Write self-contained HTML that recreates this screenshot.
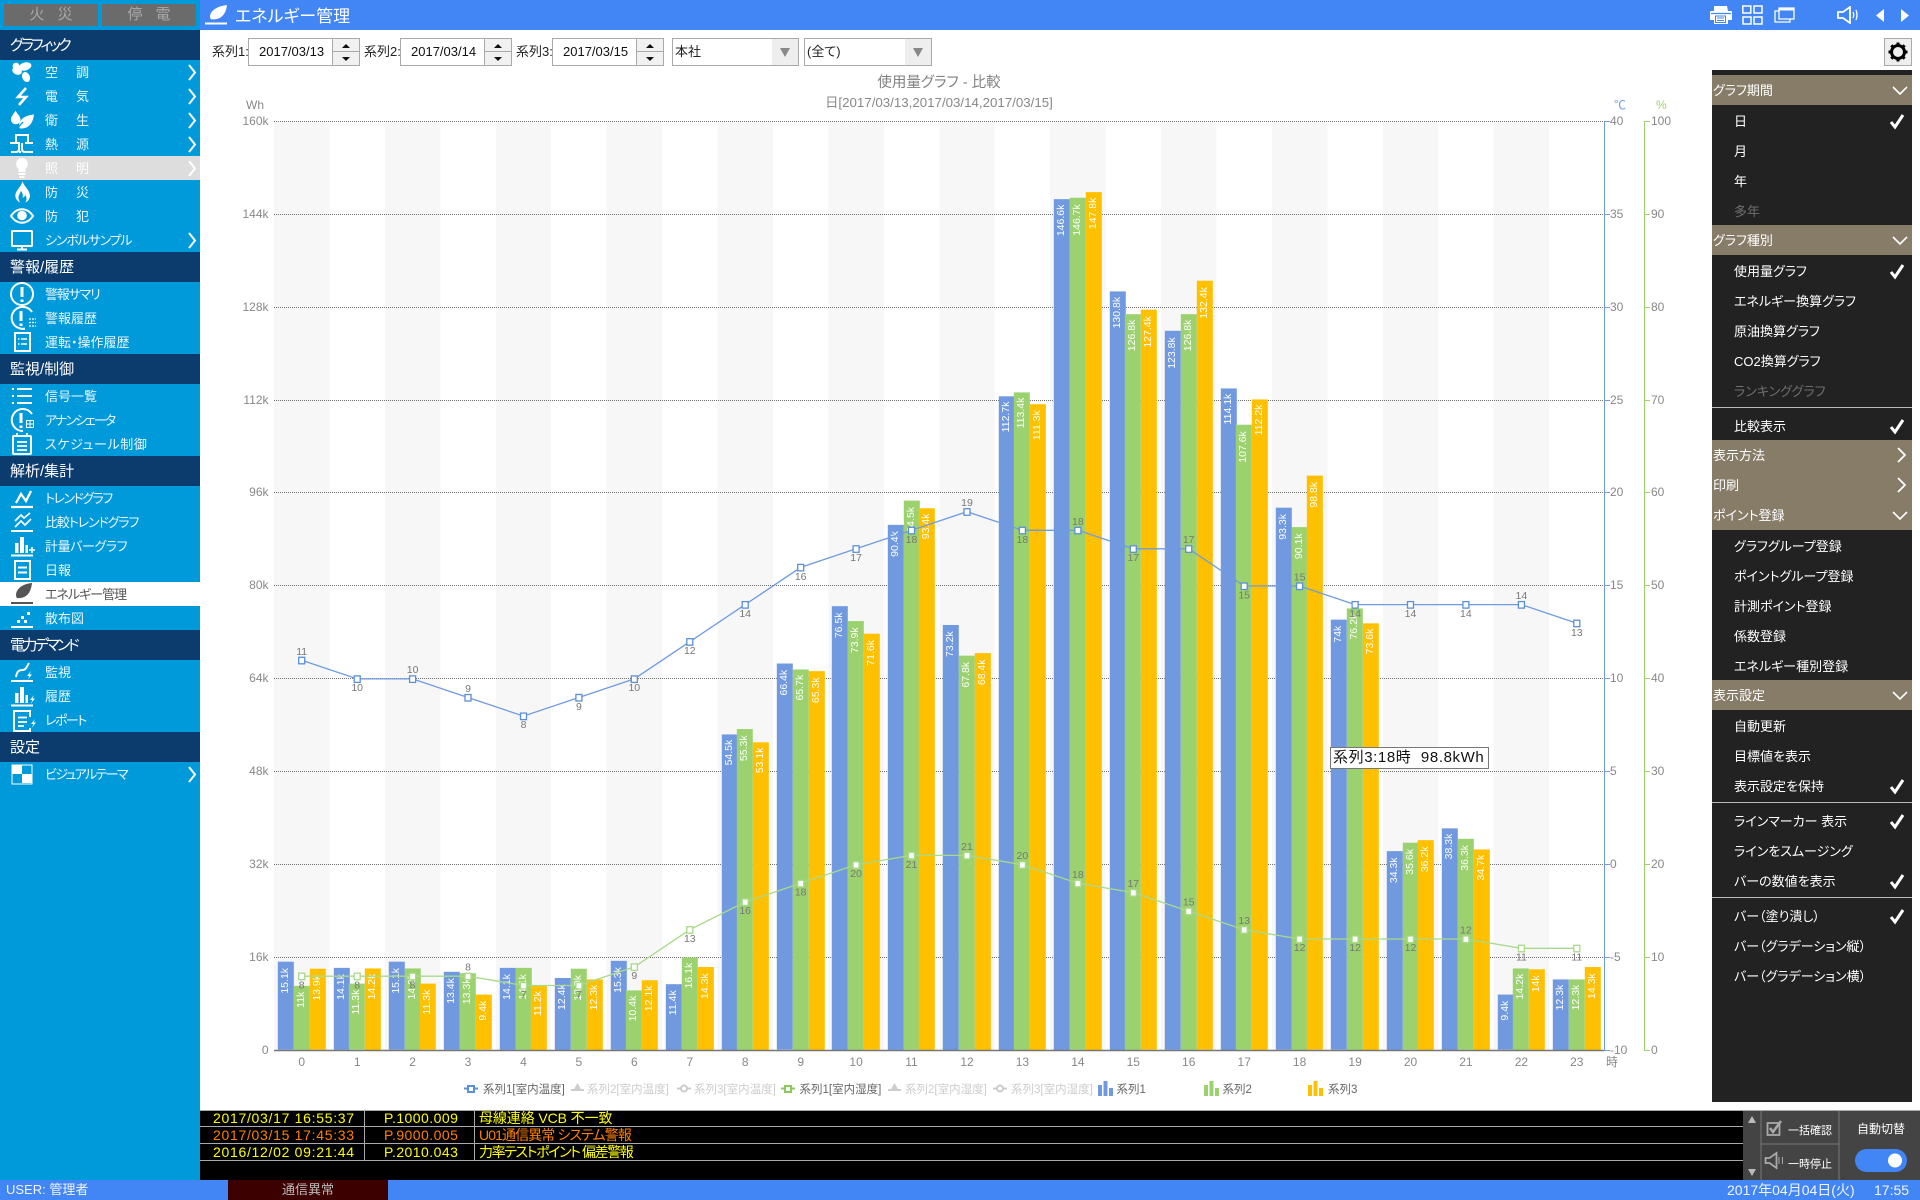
<!DOCTYPE html>
<html lang="ja"><head><meta charset="utf-8"><title>エネルギー管理</title>
<style>
*{box-sizing:border-box}
html,body{margin:0;padding:0;width:1920px;height:1200px;overflow:hidden;background:#fff;font-family:"Liberation Sans","Noto Sans CJK JP",sans-serif;font-feature-settings:"palt"}
.a{position:absolute}
#side{left:0;top:0;width:200px;height:1180px;background:#009ada;color:#fff}
.ab{position:absolute;top:4px;width:94px;height:22px;background:#6b6b6b;color:#a8a8a8;font-size:15px;line-height:22px;text-align:center;letter-spacing:13px;padding-left:13px}
#nav{position:absolute;top:30px;left:0;width:200px}
.s{height:30px;line-height:32px;background:#0c3b6e;padding-left:10px;font-size:15px}
.r{position:relative;height:24px;line-height:26px;padding-left:45px;font-size:13px;color:#eaf6fc;white-space:nowrap}
.r .w{letter-spacing:18px}
.r.dis{background:#ddd;color:#fff}
.r.act{background:#fff;color:#555}
.ic{position:absolute;left:8px;top:0;width:28px;height:24px;fill:none;stroke:#fff;stroke-width:2}
.ic .f{fill:#fff;stroke:none}
.act .ic{stroke:#555}.act .ic .f{fill:#555}
.cv{position:absolute;left:187px;top:4px;width:10px;height:17px;fill:none;stroke:#fff;stroke-width:2}
#top{left:200px;top:0;width:1720px;height:30px;background:#4285f4;color:#fff}
.inp{position:absolute;top:38px;height:28px;background:#fff;border:1px solid #aaa;font-size:13px;line-height:26px;color:#111}
.spin{position:absolute;top:0;right:0;width:27px;height:26px;border-left:1px solid #aaa;background:#f1f1f1}
.spin:before{content:"";position:absolute;left:0;right:0;top:12px;border-top:1px solid #aaa}
.spin i{position:absolute;left:9px;width:0;height:0;border-left:4px solid transparent;border-right:4px solid transparent}
.spin i.u{top:5px;border-bottom:4px solid #111}.spin i.d{top:18px;border-top:4px solid #111}
.lb{position:absolute;top:38px;height:28px;line-height:28px;font-size:13px;color:#222}
.sel{position:absolute;top:38px;height:28px;background:#fff;border:1px solid #aaa;font-size:13px;line-height:26px;padding-left:2px;color:#222}
.sel s{position:absolute;right:0;top:0;width:26px;height:26px;background:#eee}
.sel s:after{content:"";position:absolute;left:8px;top:9px;border-left:5px solid transparent;border-right:5px solid transparent;border-top:9px solid #888}
#stripes{left:274px;top:122px;width:1330px;height:928px;background:repeating-linear-gradient(90deg,#f7f7f7 0,#f7f7f7 55.44px,#fff 55.44px,#fff 110.88px)}
.g{position:absolute;bottom:150px;width:48px;display:flex;align-items:flex-end}
.g b{display:block;flex:0 0 15.8px;width:15.8px;height:calc(var(--v)*5.806px);font-weight:400;font-size:10.5px;line-height:15.8px;color:#fff;writing-mode:vertical-rl;transform:rotate(180deg);text-align:right;padding-bottom:6px;white-space:nowrap;background:#7099e0}
.g b:nth-child(2){background:#9bd26f}
.g b:nth-child(3){background:#ffc000}
svg text{font-family:"Liberation Sans","Noto Sans CJK JP",sans-serif}
.tx text{font-size:10.5px;fill:#777;text-anchor:middle}
.yl text{font-size:12px;fill:#888;text-anchor:end}
.yr text{font-size:12px;fill:#888}
.xl text{font-size:12px;fill:#888;text-anchor:middle}
.lg text{font-size:11.5px;fill:#666}
.lg .off{fill:#ccc}
#panel{left:1712px;top:70px;width:200px;height:1032px;background:#222;color:#fff;font-size:13px;padding-top:5px}
.h{position:relative;height:30px;line-height:32px;background:#877c68;padding-left:1px;white-space:nowrap}
.it{position:relative;height:30px;line-height:33px;padding-left:22px;white-space:nowrap}
.it.off{color:#6e6e6e}
.sep{height:5px;position:relative}
.sep:after{content:"";position:absolute;left:0;right:0;top:2px;border-top:1px solid #bbb}
.ck{position:absolute;left:177px;top:9px;width:16px;height:16px;fill:none;stroke:#fff;stroke-width:3}
.dn{position:absolute;left:180px;top:11px;width:16px;height:9px;fill:none;stroke:#fff;stroke-width:1.6}
.rt{position:absolute;left:185px;top:7px;width:9px;height:16px;fill:none;stroke:#fff;stroke-width:1.8}
#alarm{left:200px;top:1110px;width:1543px;height:70px;background:#000;font-size:14px;white-space:nowrap}
.row{position:absolute;left:0;width:1543px;height:17px;border-bottom:1px solid #aaa;line-height:16px;color:#ff0;letter-spacing:.45px}
.row span{position:absolute;top:0}
.row.o{color:#ff7f00}
.vl{position:absolute;top:0;height:51px;border-left:1px solid #aaa}
#stat{left:0;top:1180px;width:1920px;height:20px;background:#4285f4;color:#f0f5ff;line-height:20px;white-space:nowrap}
</style></head><body>

<div id="side" class="a">
<div class="ab" style="left:4px">火災</div>
<div class="ab" style="left:102px">停電</div>
<div id="nav">
<div class="s" style="letter-spacing:-2.8px">グラフィック</div>
<div class="r"><svg class="ic" viewBox="0 0 28 24"><g class="f"><ellipse cx="17" cy="6.5" rx="6.5" ry="4" transform="rotate(-15 17 6.5)"/><ellipse cx="9" cy="11" rx="5" ry="3.6" transform="rotate(20 9 11)"/><ellipse cx="18" cy="17" rx="3.8" ry="5.2" transform="rotate(-25 18 17)"/><ellipse cx="8" cy="6" rx="3.4" ry="3.4"/></g></svg><span class="w">空調</span><svg class="cv" viewBox="0 0 10 17"><path d="M2 1l6 7.5L2 16"/></svg></div>
<div class="r"><svg class="ic" viewBox="0 0 28 24"><path d="M18 4l-8 9h8l-7 8" stroke-width="2.6"/></svg><span class="w">電気</span><svg class="cv" viewBox="0 0 10 17"><path d="M2 1l6 7.5L2 16"/></svg></div>
<div class="r"><svg class="ic" viewBox="0 0 28 24"><path class="f" d="M7.500 2.500C9 6 12.500 8 12.500 11.500a4.800 4.800 0 0 1-9.600 0C2.900 8 6 6 7.500 2.500z"/><path class="f" d="M26 6.500C16 7.500 11 12 11 17.500c0 1.200.4 2.200 1 3C21 21 25 15 26 6.500z"/><path d="M6 24l9-10" stroke="#009ada" stroke-width="1.300"/></svg><span class="w">衛生</span><svg class="cv" viewBox="0 0 10 17"><path d="M2 1l6 7.5L2 16"/></svg></div>
<div class="r"><svg class="ic" viewBox="0 0 28 24"><path d="M8 11V3h12v8M2 11h9v6q0 3-3 3H3M17 11h8M14 11v6q0 3 3 3h8M13 20h-2" stroke-width="2"/></svg><span class="w">熱源</span><svg class="cv" viewBox="0 0 10 17"><path d="M2 1l6 7.5L2 16"/></svg></div>
<div class="r dis"><svg class="ic" viewBox="0 0 28 24"><path class="f" d="M14 2a6 6 0 0 1 3.500 10.800V16h-7v-3.200A6 6 0 0 1 14 2zM10.500 17h7v2h-7zM11.500 20h5v2h-5z"/></svg><span class="w">照明</span><svg class="cv" viewBox="0 0 10 17"><path d="M2 1l6 7.5L2 16"/></svg></div>
<div class="r"><svg class="ic" viewBox="0 0 28 24"><path class="f" d="M14.500 1c1 5 7.500 9 7.500 15a7.500 7.500 0 0 1-5 6.500c2-2 2-5 .2-7.500-.6 2-1.700 2.500-2.500 2.700.6-3-.4-5.500-2-7-.1 3-2.400 4-2.200 7 .1 2 .8 3.500 1.800 4.800a7.500 7.500 0 0 1-5-7C7.500 10 13.500 7 14.500 1z"/></svg><span class="w">防災</span></div>
<div class="r"><svg class="ic" viewBox="0 0 28 24"><path d="M3 12c6-9 16-9 22 0-6 9-16 9-22 0z"/><circle class="f" cx="14" cy="11.500" r="4.800"/></svg><span class="w">防犯</span></div>
<div class="r" style="letter-spacing:-1.2px"><svg class="ic" viewBox="0 0 28 24"><rect x="4" y="3" width="20" height="15" rx=".5"/><path d="M9 21.500h10M14 18v3" /></svg>シンボルサンプル<svg class="cv" viewBox="0 0 10 17"><path d="M2 1l6 7.500L2 16"/></svg></div>
<div class="s">警報/履歴</div>
<div class="r" style="letter-spacing:-1.2px"><svg class="ic" viewBox="0 0 28 24"><circle cx="14" cy="12" r="11"/><path d="M14 5v10M14 17.500v2.500" stroke-width="3"/></svg>警報サマリ</div>
<div class="r"><svg class="ic" viewBox="0 0 28 24"><path d="M24 6A11 11 0 1 0 17 22.600"/><path d="M13 5v10M13 17.500v2.500" stroke-width="3"/><path d="M21 13h8M21 16.500h8M21 20h8" stroke-width="1.300" stroke-dasharray="2 1"/></svg>警報履歴</div>
<div class="r"><svg class="ic" viewBox="0 0 28 24"><rect x="7" y="3" width="15" height="18"/><path d="M10 9h1.500M13 9h6M10 14h1.500M13 14h6" stroke-width="1.600"/></svg>運転・操作履歴</div>
<div class="s">監視/制御</div>
<div class="r"><svg class="ic" viewBox="0 0 28 24"><path d="M4 5h2M9 5h15M4 12h2M9 12h15M4 19h2M9 19h15"/></svg>信号一覧</div>
<div class="r" style="letter-spacing:-1.9px"><svg class="ic" viewBox="0 0 28 24"><path d="M24 6A11 11 0 1 0 15 23"/><path d="M13 5v10M13 17.500v2.500" stroke-width="3"/><path d="M18.500 12.500h7v7h-7zM22 12.500v7M18.500 16h7" stroke-width="1"/></svg>アナンシェータ</div>
<div class="r" style="letter-spacing:.6px"><svg class="ic" viewBox="0 0 28 24"><rect x="5" y="4" width="18" height="18" rx="1"/><path d="M9 1v4M19 1v4M9 10h10M9 14h10M9 18h10" stroke-width="1.700"/></svg>スケジュール制御</div>
<div class="s">解析/集計</div>
<div class="r" style="letter-spacing:-1.5px"><svg class="ic" viewBox="0 0 28 24"><path d="M3 21h22M8 17l5-9 5 7 5-10" stroke-width="2.300"/></svg>トレンドグラフ</div>
<div class="r" style="letter-spacing:-1.1px"><svg class="ic" viewBox="0 0 28 24"><path d="M3 21h22"/><path d="M7 11l6-6 3 3 6-5M7 17l6-6 4 4 6-6" stroke-width="1.700"/></svg>比較トレンドグラフ</div>
<div class="r" style="letter-spacing:-.4px"><svg class="ic" viewBox="0 0 28 24"><path d="M3 21.500h22"/><path class="f" d="M7 9h3.500v10H7zM12 3h4v16h-4zM17.500 11H20v8h-2.500z"/><path d="M24 13v6M21 16h6" stroke-width="1.600"/></svg>計量バーグラフ</div>
<div class="r"><svg class="ic" viewBox="0 0 28 24"><rect x="7" y="3" width="15" height="18"/><path d="M10 9.500h9M10 14.500h9"/></svg>日報</div>
<div class="r act" style="letter-spacing:-1px"><svg class="ic" viewBox="0 0 28 24"><path class="f" d="M24 1C13 2 8 8 8 13c0 1.200.4 2.300 1 3C19 17 23 10 24 1z"/><path d="M3 21h22"/></svg>エネルギー管理</div>
<div class="r"><svg class="ic" viewBox="0 0 28 24"><path d="M3 21h22"/><path class="f" d="M9 14h3v3H9zM13 10h3v3h-3zM16 14h3v3h-3zM19 6h3v3h-3z"/></svg>散布図</div>
<div class="s" style="letter-spacing:-2.6px">電力デマンド</div>
<div class="r"><svg class="ic" viewBox="0 0 28 24"><path d="M3 21h22M8 17c1-6 3-7 7-7 3 0 4-4 6-7"/><path class="f" d="M23 11l-4 5h2.500l-2 4 4.500-5.500H21.500z"/></svg>監視</div>
<div class="r"><svg class="ic" viewBox="0 0 28 24"><path d="M3 21.500h22"/><path class="f" d="M7 9h3.500v10H7zM12 3h4v16h-4zM17.500 11H20v8h-2.500z"/><path class="f" d="M26 11l-4 5h2.500l-2 4 4.500-5.500h-2.500z"/></svg>履歴</div>
<div class="r" style="letter-spacing:-1.5px"><svg class="ic" viewBox="0 0 28 24"><path d="M22 9V3H6v20h16v-3"/><path d="M10 9.500h9M10 14h9M10 18h6" stroke-width="1.800"/><path class="f" d="M27 11l-4 5h2.500l-2 4 4.500-5.500h-2.500z"/></svg>レポート</div>
<div class="s">設定</div>
<div class="r" style="letter-spacing:-1.6px"><svg class="ic" viewBox="0 0 28 24"><path class="f" d="M4 3h10v9H4zM14 12h10v9H14z"/><path d="M4 3h20v19H4z" stroke-width="1"/></svg>ビジュアルテーマ<svg class="cv" viewBox="0 0 10 17"><path d="M2 1l6 7.500L2 16"/></svg></div>
</div>
</div>

<div id="top" class="a">
<svg class="a" style="left:5px;top:5px" width="24" height="20" viewBox="0 0 24 20" fill="#fff"><path d="M22 0C10 1.500 5 7 5 11.500c0 1 .3 2 1 2.700C16 15.500 21 9 22 0z"/><path d="M0 17.500h22v2H0z"/></svg>
<div class="a" style="left:35px;top:0;line-height:33px;font-size:17px;white-space:nowrap">エネルギー管理</div>
<svg class="a" style="left:1510px;top:5px" width="22" height="20" viewBox="0 0 22 20"><path fill="#fff" d="M4 1h13l1 5h3a1 1 0 0 1 1 1v8h-4v4H4v-4H0V7a1 1 0 0 1 1-1h3z"/><path d="M5.500 11h10v6.500h-10zM7 13h7M7 15.500h7" fill="#fff" stroke="#4285f4" stroke-width="1"/><path d="M1 8.500h20" stroke="#4285f4" stroke-width="1.200"/></svg>
<svg class="a" style="left:1542px;top:5px" width="21" height="20" viewBox="0 0 21 20" fill="none" stroke="#fff" stroke-width="1.500"><rect x=".8" y="1" width="8" height="7"/><rect x="12" y="1" width="8" height="7"/><rect x="1" y="12" width="8" height="7"/><rect x="12" y="12" width="8" height="7"/></svg>
<svg class="a" style="left:1574px;top:6px" width="21" height="18" viewBox="0 0 21 18" fill="none" stroke="#fff" stroke-width="1.300"><path d="M5 2h15v11H5z"/><path d="M5 3.500h15" stroke-width="2"/><path d="M5 5H1v11h15v-3"/></svg>
<svg class="a" style="left:1637px;top:6px" width="24" height="18" viewBox="0 0 24 18" fill="none" stroke="#fff" stroke-width="1.800"><path d="M1 6h5l7-5v16l-7-5H1z"/><path d="M16 6q1.500 3 0 6M19 4q2 5 0 10" stroke-width="1.300"/></svg>
<svg class="a" style="left:1676px;top:9px" width="8" height="13" viewBox="0 0 8 13" fill="#fff"><path d="M8 0v13L0 6.500z"/></svg>
<svg class="a" style="left:1701px;top:9px" width="8" height="13" viewBox="0 0 8 13" fill="#fff"><path d="M0 0v13l8-6.500z"/></svg>
</div>

<div class="lb" style="left:212px">系列1:</div>
<div class="inp" style="left:248px;width:112px;padding-left:10px">2017/03/13<div class="spin"><i class="u"></i><i class="d"></i></div></div>
<div class="lb" style="left:364px">系列2:</div>
<div class="inp" style="left:400px;width:112px;padding-left:10px">2017/03/14<div class="spin"><i class="u"></i><i class="d"></i></div></div>
<div class="lb" style="left:516px">系列3:</div>
<div class="inp" style="left:552px;width:112px;padding-left:10px">2017/03/15<div class="spin"><i class="u"></i><i class="d"></i></div></div>
<div class="sel" style="left:672px;width:127px">本社<s></s></div>
<div class="sel" style="left:804px;width:128px">(全て)<s></s></div>
<svg class="a" style="left:1884px;top:38px" width="28" height="28" viewBox="0 0 28 28"><rect x=".5" y=".5" width="27" height="27" fill="#eee" stroke="#aaa"/><circle cx="14" cy="14" r="6.500" fill="none" stroke="#000" stroke-width="3"/><path d="M14 4.500v19M4.500 14h19" stroke="#000" stroke-width="3" stroke-dasharray="2.500 14 2.500"/><path d="M7.300 7.300l13.400 13.400M20.700 7.300L7.300 20.700" stroke="#000" stroke-width="3" stroke-dasharray="2.500 14 2.500"/></svg>

<div class="a" style="left:739px;width:400px;top:73px;text-align:center;font-size:14.500px;line-height:20px;color:#808080">使用量グラフ - 比較</div>
<div class="a" style="left:739px;width:400px;top:94px;text-align:center;font-size:13.300px;line-height:18px;color:#888">日[2017/03/13,2017/03/14,2017/03/15]</div>

<div id="stripes" class="a"></div>
<svg class="a" style="left:0;top:0" width="1920" height="1200"><g stroke="#707070" stroke-width="1" stroke-dasharray="1 1"><path d="M274 121.500H1604M274 214.500H1604M274 307.500H1604M274 400.500H1604M274 492.500H1604M274 585.500H1604M274 678.500H1604M274 771.500H1604M274 864.500H1604M274 957.500H1604"/></g></svg>

<div class="g" style="left:278px"><b style="--v:15.1">15.1k</b><b style="--v:11">11k</b><b style="--v:13.9">13.9k</b></div>
<div class="g" style="left:333.5px"><b style="--v:14.1">14.1k</b><b style="--v:11.3">11.3k</b><b style="--v:14.2">14.2k</b></div>
<div class="g" style="left:388.9px"><b style="--v:15.1">15.1k</b><b style="--v:14.2">14.2k</b><b style="--v:11.3">11.3k</b></div>
<div class="g" style="left:444.3px"><b style="--v:13.4">13.4k</b><b style="--v:13.3">13.3k</b><b style="--v:9.4">9.4k</b></div>
<div class="g" style="left:499.8px"><b style="--v:14.1">14.1k</b><b style="--v:14.1">14.1k</b><b style="--v:11.2">11.2k</b></div>
<div class="g" style="left:555.2px"><b style="--v:12.4">12.4k</b><b style="--v:13.9">13.9k</b><b style="--v:12.3">12.3k</b></div>
<div class="g" style="left:610.6px"><b style="--v:15.3">15.3k</b><b style="--v:10.4">10.4k</b><b style="--v:12.1">12.1k</b></div>
<div class="g" style="left:666.1px"><b style="--v:11.4">11.4k</b><b style="--v:16.1">16.1k</b><b style="--v:14.3">14.3k</b></div>
<div class="g" style="left:721.5px"><b style="--v:54.5">54.5k</b><b style="--v:55.3">55.3k</b><b style="--v:53.1">53.1k</b></div>
<div class="g" style="left:777px"><b style="--v:66.4">66.4k</b><b style="--v:65.7">65.7k</b><b style="--v:65.3">65.3k</b></div>
<div class="g" style="left:832.4px"><b style="--v:76.5">76.5k</b><b style="--v:73.9">73.9k</b><b style="--v:71.6">71.6k</b></div>
<div class="g" style="left:887.8px"><b style="--v:90.4">90.4k</b><b style="--v:94.5">94.5k</b><b style="--v:93.4">93.4k</b></div>
<div class="g" style="left:943.3px"><b style="--v:73.2">73.2k</b><b style="--v:67.8">67.8k</b><b style="--v:68.4">68.4k</b></div>
<div class="g" style="left:998.7px"><b style="--v:112.7">112.7k</b><b style="--v:113.4">113.4k</b><b style="--v:111.3">111.3k</b></div>
<div class="g" style="left:1054.2px"><b style="--v:146.6">146.6k</b><b style="--v:146.7">146.7k</b><b style="--v:147.8">147.8k</b></div>
<div class="g" style="left:1109.6px"><b style="--v:130.8">130.8k</b><b style="--v:126.8">126.8k</b><b style="--v:127.4">127.4k</b></div>
<div class="g" style="left:1165px"><b style="--v:123.8">123.8k</b><b style="--v:126.8">126.8k</b><b style="--v:132.4">132.4k</b></div>
<div class="g" style="left:1220.5px"><b style="--v:114.1">114.1k</b><b style="--v:107.6">107.6k</b><b style="--v:112.2">112.2k</b></div>
<div class="g" style="left:1275.9px"><b style="--v:93.3">93.3k</b><b style="--v:90.1">90.1k</b><b style="--v:98.8">98.8k</b></div>
<div class="g" style="left:1331.4px"><b style="--v:74">74k</b><b style="--v:76.2">76.2k</b><b style="--v:73.6">73.6k</b></div>
<div class="g" style="left:1386.8px"><b style="--v:34.3">34.3k</b><b style="--v:35.6">35.6k</b><b style="--v:36.2">36.2k</b></div>
<div class="g" style="left:1442.2px"><b style="--v:38.3">38.3k</b><b style="--v:36.3">36.3k</b><b style="--v:34.7">34.7k</b></div>
<div class="g" style="left:1497.7px"><b style="--v:9.4">9.4k</b><b style="--v:14.2">14.2k</b><b style="--v:14">14k</b></div>
<div class="g" style="left:1553.1px"><b style="--v:12.3">12.3k</b><b style="--v:12.3">12.3k</b><b style="--v:14.3">14.3k</b></div>

<svg class="a" style="left:0;top:0" width="1920" height="1200">
<defs>
<marker id="mb" markerUnits="userSpaceOnUse" markerWidth="10" markerHeight="10" refX="5" refY="5"><rect x="2" y="2" width="6" height="6.500" fill="#fff" stroke="#5b8fd8" stroke-width="1.300"/></marker>
<marker id="mg" markerUnits="userSpaceOnUse" markerWidth="10" markerHeight="10" refX="5" refY="5"><rect x="2" y="2" width="6" height="6.500" fill="#fff" stroke="#a9d98a" stroke-width="1.300"/></marker>
</defs>
<path d="M274 1050.500H1604" stroke="#777" stroke-width="1.500"/>
<path d="M1604.500 121V1051M1604 121.500h6M1604 214.500h6M1604 307.500h6M1604 400.500h6M1604 492.500h6M1604 585.500h6M1604 678.500h6M1604 771.500h6M1604 864.500h6M1604 957.500h6M1604 1050.500h6" stroke="#6f9be0" fill="none"/>
<path d="M1644.500 121V1051M1644 121.500h6M1644 214.500h6M1644 307.500h6M1644 400.500h6M1644 492.500h6M1644 585.500h6M1644 678.500h6M1644 771.500h6M1644 864.500h6M1644 957.500h6M1644 1050.500h6" stroke="#9bd26f" fill="none"/>
<polyline fill="none" stroke="#6f9be0" stroke-width="1.300" marker-start="url(#mb)" marker-mid="url(#mb)" marker-end="url(#mb)" points="301.7,660.3 357.2,678.9 412.6,678.9 468,697.5 523.5,716.1 578.9,697.5 634.3,678.9 689.8,641.7 745.2,604.6 800.7,567.4 856.1,548.8 911.5,530.3 967,511.7 1022.4,530.3 1077.9,530.3 1133.3,548.8 1188.7,548.8 1244.2,586 1299.6,586 1355.1,604.6 1410.5,604.6 1465.9,604.6 1521.4,604.6 1576.8,623.2"/>
<polyline fill="none" stroke="#a9d98a" stroke-width="1.300" marker-start="url(#mg)" marker-mid="url(#mg)" marker-end="url(#mg)" points="301.7,976.2 357.2,976.2 412.6,976.2 468,976.2 523.5,985.5 578.9,985.5 634.3,966.9 689.8,929.7 745.2,901.9 800.7,883.3 856.1,864.7 911.5,855.4 967,855.4 1022.4,864.7 1077.9,883.3 1133.3,892.6 1188.7,911.2 1244.2,929.7 1299.6,939 1355.1,939 1410.5,939 1465.9,939 1521.4,948.3 1576.8,948.3"/>
<g class="tx">
<text x="301.7" y="655">11</text><text x="357.2" y="691">10</text><text x="412.6" y="673">10</text><text x="468" y="692">9</text><text x="523.5" y="728">8</text><text x="578.9" y="710">9</text><text x="634.3" y="691">10</text><text x="689.8" y="654">12</text><text x="745.2" y="617">14</text><text x="800.7" y="580">16</text><text x="856.1" y="561">17</text><text x="911.5" y="543">18</text><text x="967" y="506">19</text><text x="1022.4" y="543">18</text><text x="1077.9" y="525">18</text><text x="1133.3" y="561">17</text><text x="1188.7" y="543">17</text><text x="1244.2" y="598.5">15</text><text x="1299.6" y="580.5">15</text><text x="1355.1" y="617">14</text><text x="1410.5" y="617">14</text><text x="1465.9" y="617">14</text><text x="1521.4" y="599">14</text><text x="1576.8" y="636">13</text>
<text x="301.7" y="988.5">8</text><text x="357.2" y="988.5">8</text><text x="412.6" y="988.5">8</text><text x="468" y="970.5">8</text><text x="523.5" y="998">7</text><text x="578.9" y="998">7</text><text x="634.3" y="979">9</text><text x="689.8" y="942">13</text><text x="745.2" y="914">16</text><text x="800.7" y="895.5">18</text><text x="856.1" y="877">20</text><text x="911.5" y="868">21</text><text x="967" y="850">21</text><text x="1022.4" y="859">20</text><text x="1077.9" y="878">18</text><text x="1133.3" y="887">17</text><text x="1188.7" y="905.5">15</text><text x="1244.2" y="924">13</text><text x="1299.6" y="951">12</text><text x="1355.1" y="951">12</text><text x="1410.5" y="951">12</text><text x="1465.9" y="933.5">12</text><text x="1521.4" y="960.5">11</text><text x="1576.8" y="960.5">11</text>
</g>
<g class="yl"><text x="264" y="109" >Wh</text><text x="268.500" y="125">160k</text><text x="268.500" y="218">144k</text><text x="268.500" y="311">128k</text><text x="268.500" y="404">112k</text><text x="268.500" y="496">96k</text><text x="268.500" y="589">80k</text><text x="268.500" y="682">64k</text><text x="268.500" y="775">48k</text><text x="268.500" y="868">32k</text><text x="268.500" y="961">16k</text><text x="268.500" y="1054">0</text></g>
<g class="yr"><text x="1610" y="125">40</text><text x="1610" y="218">35</text><text x="1610" y="311">30</text><text x="1610" y="404">25</text><text x="1610" y="496">20</text><text x="1610" y="589">15</text><text x="1610" y="682">10</text><text x="1610" y="775">5</text><text x="1610" y="868">0</text><text x="1610" y="961">-5</text><text x="1610" y="1054">-10</text>
<text x="1651" y="125">100</text><text x="1651" y="218">90</text><text x="1651" y="311">80</text><text x="1651" y="404">70</text><text x="1651" y="496">60</text><text x="1651" y="589">50</text><text x="1651" y="682">40</text><text x="1651" y="775">30</text><text x="1651" y="868">20</text><text x="1651" y="961">10</text><text x="1651" y="1054">0</text></g>
<text x="1614" y="109" style="font-size:12px;fill:#6f9be0">℃</text><text x="1656" y="109" style="font-size:12px;fill:#9bd26f">%</text>
<g class="xl"><text x="301.7" y="1066">0</text><text x="357.2" y="1066">1</text><text x="412.6" y="1066">2</text><text x="468" y="1066">3</text><text x="523.5" y="1066">4</text><text x="578.9" y="1066">5</text><text x="634.3" y="1066">6</text><text x="689.8" y="1066">7</text><text x="745.2" y="1066">8</text><text x="800.7" y="1066">9</text><text x="856.1" y="1066">10</text><text x="911.5" y="1066">11</text><text x="967" y="1066">12</text><text x="1022.4" y="1066">13</text><text x="1077.9" y="1066">14</text><text x="1133.3" y="1066">15</text><text x="1188.7" y="1066">16</text><text x="1244.2" y="1066">17</text><text x="1299.6" y="1066">18</text><text x="1355.1" y="1066">19</text><text x="1410.5" y="1066">20</text><text x="1465.9" y="1066">21</text><text x="1521.4" y="1066">22</text><text x="1576.8" y="1066">23</text><text x="1612" y="1066">時</text></g>
<g class="lg">
<path d="M464 1088.500h14" stroke="#5b8fd8" stroke-width="2"/><rect x="468" y="1086" width="6" height="6" fill="#fff" stroke="#5b8fd8" stroke-width="2"/><text x="483" y="1093">系列1[室内温度]</text>
<path d="M571 1090h13" stroke="#ccc" stroke-width="2"/><path d="M577.500 1083l4.500 8h-9z" fill="#ccc"/><text x="587" y="1093" class="off">系列2[室内温度]</text>
<path d="M677 1088.500h14" stroke="#ccc" stroke-width="2"/><circle cx="684" cy="1088.500" r="3" fill="#fff" stroke="#ccc" stroke-width="2"/><text x="694" y="1093" class="off">系列3[室内温度]</text>
<path d="M781 1088.500h14" stroke="#8cc85c" stroke-width="2"/><rect x="785" y="1086" width="6" height="6" fill="#fff" stroke="#8cc85c" stroke-width="2"/><text x="799.500" y="1093">系列1[室内湿度]</text>
<path d="M888 1090h13" stroke="#ccc" stroke-width="2"/><path d="M894.500 1083l4.500 8h-9z" fill="#ccc"/><text x="905" y="1093" class="off">系列2[室内湿度]</text>
<path d="M993 1088.500h14" stroke="#ccc" stroke-width="2"/><circle cx="1000" cy="1088.500" r="3" fill="#fff" stroke="#ccc" stroke-width="2"/><text x="1011" y="1093" class="off">系列3[室内湿度]</text>
<path d="M1098 1085h4v11h-4zM1103.500 1081h4v15h-4zM1109 1088h4v8h-4z" fill="#7099e0"/><text x="1116.500" y="1093">系列1</text>
<path d="M1204 1085h4v11h-4zM1209.500 1081h4v15h-4zM1215 1088h4v8h-4z" fill="#9bd26f"/><text x="1222.500" y="1093">系列2</text>
<path d="M1308 1085h4v11h-4zM1313.500 1081h4v15h-4zM1319 1088h4v8h-4z" fill="#ffc000"/><text x="1328" y="1093">系列3</text>
</g>
</svg>
<div class="a" style="left:1330px;top:747px;width:159px;height:22px;background:#fff;border:1px solid #777;color:#111;font-size:15px;letter-spacing:.6px;line-height:20px;padding-left:2px;white-space:pre">系列3:18時  98.8kWh</div>

<div id="panel" class="a">
<div class="h">グラフ期間<svg class="dn" viewBox="0 0 16 9"><path d="M1 1l7 7 7-7"/></svg></div>
<div class="it">日<svg class="ck" viewBox="0 0 16 16"><path d="M2 8l4 5 8-12"/></svg></div>
<div class="it">月</div><div class="it">年</div><div class="it off">多年</div>
<div class="h">グラフ種別<svg class="dn" viewBox="0 0 16 9"><path d="M1 1l7 7 7-7"/></svg></div>
<div class="it">使用量グラフ<svg class="ck" viewBox="0 0 16 16"><path d="M2 8l4 5 8-12"/></svg></div>
<div class="it">エネルギー換算グラフ</div><div class="it">原油換算グラフ</div><div class="it">CO2換算グラフ</div><div class="it off">ランキンググラフ</div>
<div class="sep"></div>
<div class="it">比較表示<svg class="ck" viewBox="0 0 16 16"><path d="M2 8l4 5 8-12"/></svg></div>
<div class="h">表示方法<svg class="rt" viewBox="0 0 9 16"><path d="M1 1l7 7-7 7"/></svg></div>
<div class="h">印刷<svg class="rt" viewBox="0 0 9 16"><path d="M1 1l7 7-7 7"/></svg></div>
<div class="h">ポイント登録<svg class="dn" viewBox="0 0 16 9"><path d="M1 1l7 7 7-7"/></svg></div>
<div class="it">グラフグループ登録</div><div class="it">ポイントグループ登録</div><div class="it">計測ポイント登録</div><div class="it">係数登録</div><div class="it">エネルギー種別登録</div>
<div class="h">表示設定<svg class="dn" viewBox="0 0 16 9"><path d="M1 1l7 7 7-7"/></svg></div>
<div class="it">自動更新</div><div class="it">目標値を表示</div><div class="it">表示設定を保持<svg class="ck" viewBox="0 0 16 16"><path d="M2 8l4 5 8-12"/></svg></div>
<div class="sep"></div>
<div class="it">ラインマーカー 表示<svg class="ck" viewBox="0 0 16 16"><path d="M2 8l4 5 8-12"/></svg></div><div class="it">ラインをスムージング</div><div class="it">バーの数値を表示<svg class="ck" viewBox="0 0 16 16"><path d="M2 8l4 5 8-12"/></svg></div>
<div class="sep"></div>
<div class="it">バー（塗り潰し）<svg class="ck" viewBox="0 0 16 16"><path d="M2 8l4 5 8-12"/></svg></div><div class="it">バー（グラデーション縦）</div><div class="it">バー（グラデーション横）</div>
</div>

<div id="alarm" class="a">
<div class="a" style="left:0;top:0;width:1543px;border-top:1px solid #aaa"></div>
<div class="row" style="top:0"><span style="left:13px;letter-spacing:.7px">2017/03/17 16:55:37</span><span style="left:184px">P.1000.009</span><span style="left:279px;letter-spacing:-.1px">母線連絡 VCB 不一致</span></div>
<div class="row o" style="top:17px"><span style="left:13px;letter-spacing:.7px">2017/03/15 17:45:33</span><span style="left:184px">P.9000.005</span><span style="left:279px;letter-spacing:-.9px">U01通信異常 システム警報</span></div>
<div class="row" style="top:34px"><span style="left:13px;letter-spacing:.7px">2016/12/02 09:21:44</span><span style="left:184px">P.2010.043</span><span style="left:279px;letter-spacing:-1.4px">力率テストポイント 偏差警報</span></div>
<div class="vl" style="left:164px"></div><div class="vl" style="left:274px"></div>
</div>

<div class="a" style="left:1743px;top:1110px;width:177px;height:70px;background:#444;border-top:1px solid #aaa"></div>
<svg class="a" style="left:1743px;top:1111px" width="177" height="69" viewBox="0 0 177 69">
<path d="M18 0V69M96 0V69M18 33h78" stroke="#777" fill="none"/>
<path d="M9 5l4 7H5zM9 65l-4-7h8z" fill="#bbb"/>
<path d="M24.500 12h12v12h-12z" fill="none" stroke="#aaa" stroke-width="1.800"/><path d="M27 17l3 4 8-11" fill="none" stroke="#aaa" stroke-width="2.500"/>
<path d="M22.500 47h4l7-5v15l-7-5h-4z" fill="none" stroke="#aaa" stroke-width="1.800"/><path d="M36 46v7M39.500 46v7" stroke="#aaa" stroke-width="1"/>
<text x="45" y="23" style="font-size:11px;fill:#fff">一括確認</text>
<text x="45" y="56.500" style="font-size:11px;fill:#fff">一時停止</text>
<text x="114" y="22" style="font-size:12px;fill:#fff">自動切替</text>
<rect x="112" y="38" width="52" height="23" rx="11.500" fill="#4285f4"/><circle cx="152" cy="49.500" r="7" fill="#fff"/>
</svg>

<div id="stat" class="a">
<span class="a" style="left:6px;font-size:13px">USER: 管理者</span>
<span class="a" style="left:228px;width:160px;height:20px;background:#3c0000;color:#bbb;text-align:center;font-size:13px">通信異常</span>
<span class="a" style="left:1727px;font-size:14px">2017年04月04日(火)</span>
<span class="a" style="left:1874px;font-size:14px">17:55</span>
</div>
</body></html>
